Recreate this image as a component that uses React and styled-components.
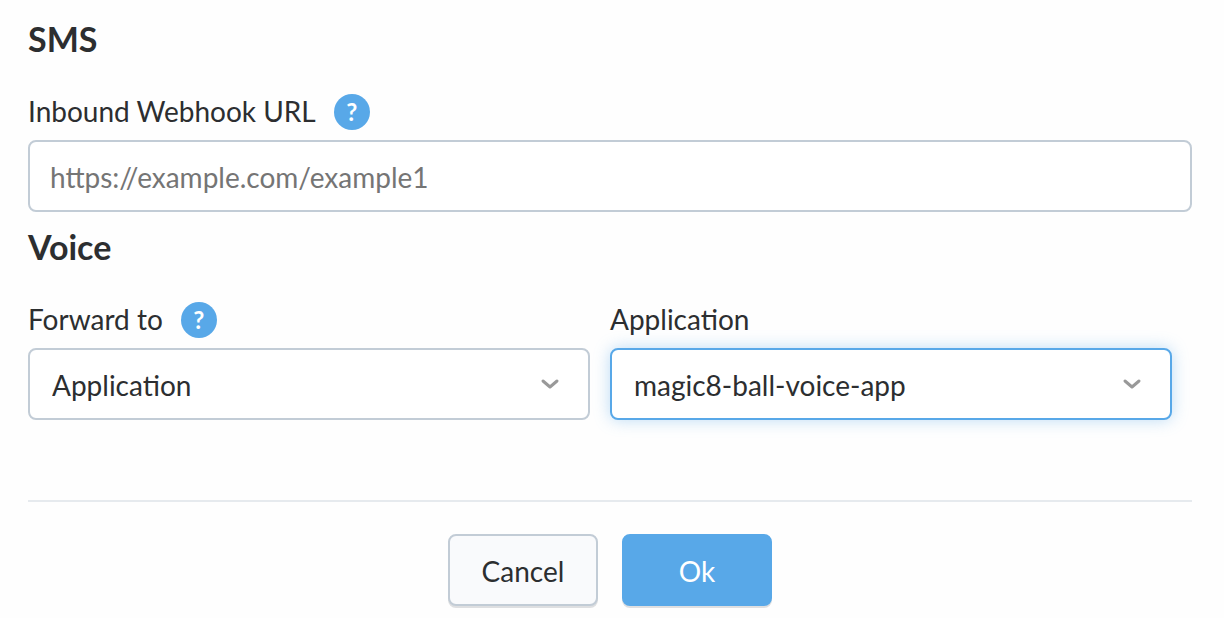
import React from "react";
import styled, { createGlobalStyle } from "styled-components";

const GlobalStyle = createGlobalStyle`
  *, *::before, *::after { box-sizing: border-box; }
  body {
    margin: 0;
    background: #fefefe;
    color: #2c2e30;
    font-family: Lato, "Liberation Sans", sans-serif;
    font-size: 28px;
    line-height: 34px;
  }
  button, input, select { font: inherit; color: inherit; }
`;

const Form = styled.form`
  padding: 20px 32px 10px 28px;
`;

const Section = styled.section`
  margin-bottom: 16px;
`;

const Heading = styled.h2`
  margin: 0 0 36px;
  font-size: 34px;
  line-height: 38px;
  font-weight: 700;
`;

const Columns = styled.div`
  display: grid;
  grid-template-columns: 1fr 1fr;
`;

const Column = styled.div`
  padding-right: 20px;
`;

const LabelRow = styled.div`
  display: flex;
  align-items: flex-start;
  gap: 18px;
  min-height: 36px;
  margin-bottom: 10px;
`;

const HelpButton = styled.button`
  width: 36px;
  height: 36px;
  padding: 0;
  border: 0;
  border-radius: 50%;
  background: #58a8e8;
  color: #fff;
  font-size: 24px;
  line-height: 36px;
  font-weight: 700;
`;

const TextInput = styled.input`
  display: block;
  width: 100%;
  height: 72px;
  padding: 2px 20px 0;
  border: 2px solid #c2ccd6;
  border-radius: 8px;
  background: #fff;
  outline: none;

  &::placeholder { color: #757575; opacity: 1; }
`;

const SelectBox = styled.div`
  display: grid;
  align-items: center;

  > * { grid-area: 1 / 1; }
`;

const Select = styled.select`
  appearance: none;
  width: 100%;
  height: 72px;
  padding: 2px 60px 0 22px;
  border: 2px solid ${(p) => (p.$active ? "#58a8e8" : "#c2ccd6")};
  border-radius: 8px;
  background: #fff;
  box-shadow: ${(p) => (p.$active ? "0 0 16px rgba(88, 168, 232, 0.4)" : "none")};
  outline: none;
`;

const Chevron = styled.svg`
  justify-self: end;
  width: 20px;
  height: 12px;
  margin-right: 30px;
  pointer-events: none;
`;

const Actions = styled.div`
  display: flex;
  justify-content: center;
  gap: 24px;
  margin-top: 80px;
  padding-top: 32px;
  border-top: 2px solid #e6eaee;
`;

const ActionButton = styled.button`
  width: 150px;
  height: 72px;
  padding: 2px 0 0;
  border: 2px solid ${(p) => (p.$primary ? "#58a8e8" : "#c2ccd6")};
  border-radius: 8px;
  background: ${(p) => (p.$primary ? "#58a8e8" : "#f9fafc")};
  color: ${(p) => (p.$primary ? "#fff" : "#2c2e30")};
  box-shadow: 0 2px 0 #dedfe1;
`;

function SelectField({ id, active, value }) {
  return (
    <SelectBox>
      <Select id={id} $active={active} defaultValue={value}>
        <option value={value}>{value}</option>
      </Select>
      <Chevron viewBox="0 0 20 12" aria-hidden="true">
        <path d="M3 3 L10 9 L17 3" fill="none" stroke="#999" strokeWidth="3" strokeLinecap="round" strokeLinejoin="round" />
      </Chevron>
    </SelectBox>
  );
}

export default function App() {
  return (
    <>
      <GlobalStyle />
      <Form onSubmit={(e) => e.preventDefault()}>
        <Section>
          <Heading>SMS</Heading>
          <LabelRow>
            <label htmlFor="webhook">Inbound Webhook URL</label>
            <HelpButton type="button">?</HelpButton>
          </LabelRow>
          <TextInput id="webhook" type="url" placeholder="https://example.com/example1" />
        </Section>
        <Section>
          <Heading>Voice</Heading>
          <Columns>
            <Column>
              <LabelRow>
                <label htmlFor="forward">Forward to</label>
                <HelpButton type="button">?</HelpButton>
              </LabelRow>
              <SelectField id="forward" value="Application" />
            </Column>
            <Column>
              <LabelRow>
                <label htmlFor="application">Application</label>
              </LabelRow>
              <SelectField id="application" value="magic8-ball-voice-app" active />
            </Column>
          </Columns>
        </Section>
        <Actions>
          <ActionButton type="button">Cancel</ActionButton>
          <ActionButton type="submit" $primary>Ok</ActionButton>
        </Actions>
      </Form>
    </>
  );
}
